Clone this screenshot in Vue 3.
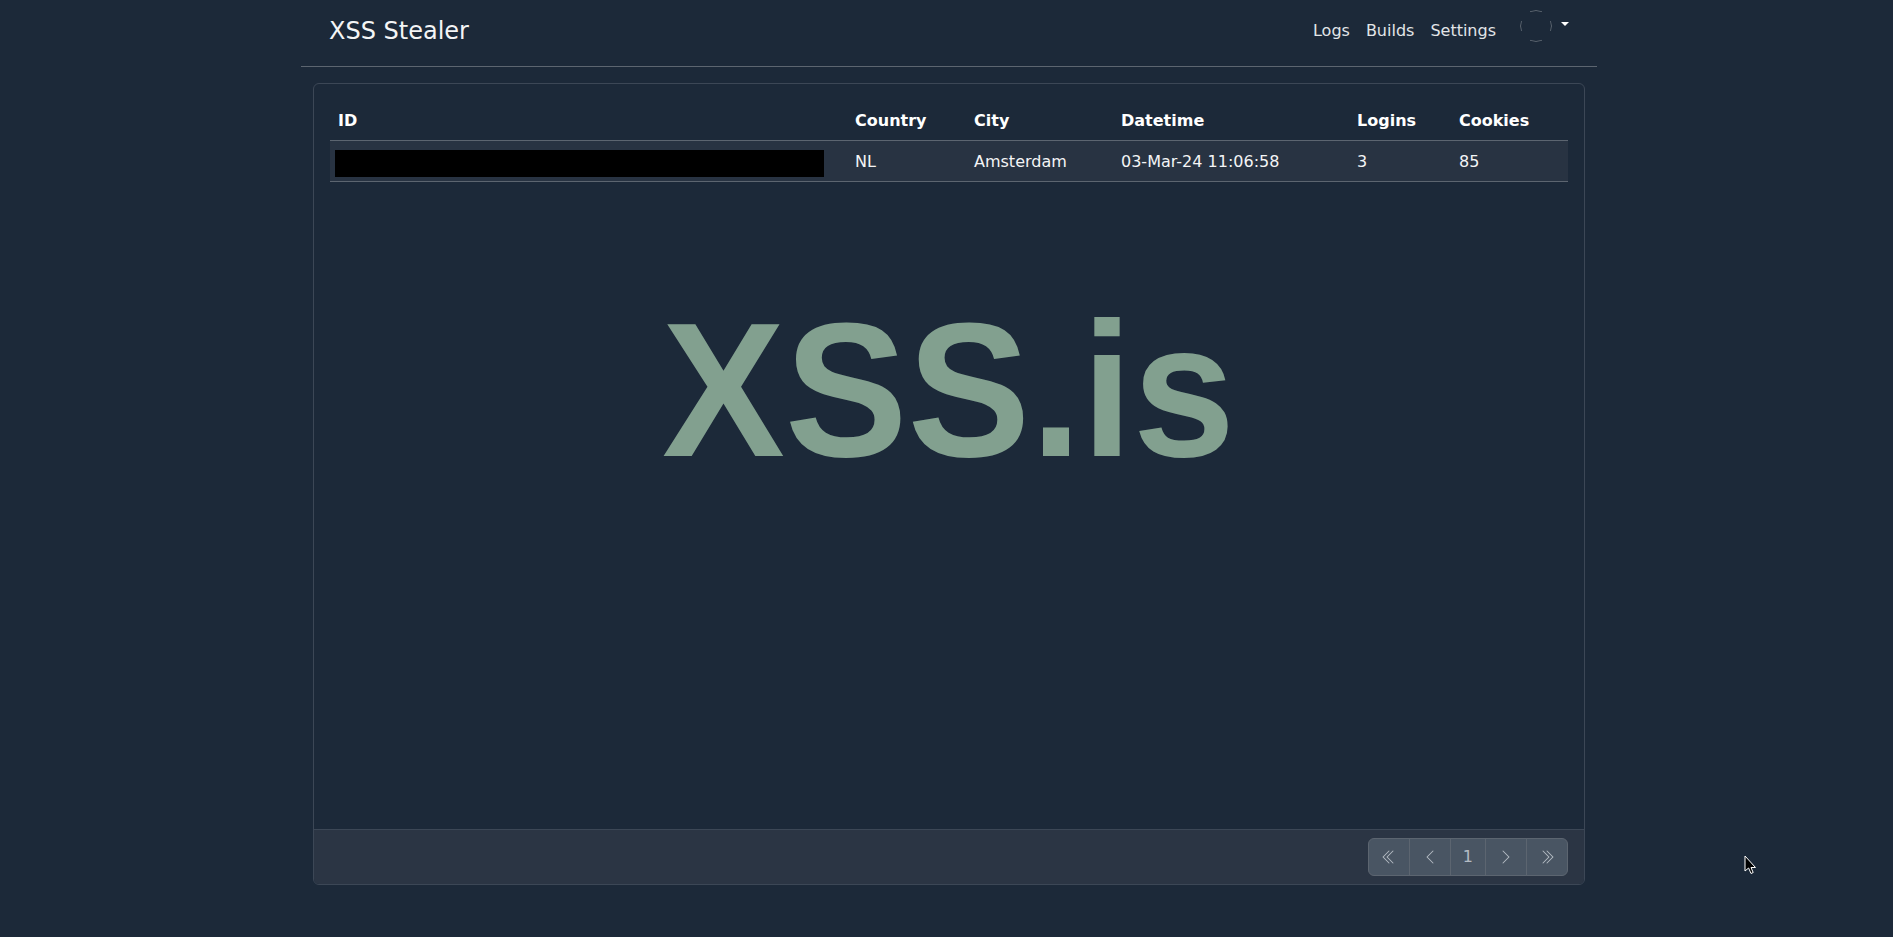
<script setup>
const columns = [
  { key: 'id', label: 'ID', width: '517px' },
  { key: 'country', label: 'Country', width: '119px' },
  { key: 'city', label: 'City', width: '147px' },
  { key: 'datetime', label: 'Datetime', width: '236px' },
  { key: 'logins', label: 'Logins', width: '102px' },
  { key: 'cookies', label: 'Cookies', width: '117px' }
]
const rows = [
  { country: 'NL', city: 'Amsterdam', datetime: '03-Mar-24 11:06:58', logins: '3', cookies: '85' }
]
</script>

<template>
  <div class="page">
    <nav class="navbar">
      <a class="brand">XSS Stealer</a>
      <div class="nav-right">
        <a class="nav-link">Logs</a>
        <a class="nav-link">Builds</a>
        <a class="nav-link">Settings</a>
        <div class="user">
          <span class="avatar"></span>
          <span class="caret"></span>
        </div>
      </div>
    </nav>

    <section class="card">
      <div class="card-body">
        <div class="watermark">XSS.is</div>
        <table class="table">
          <colgroup>
            <col v-for="c in columns" :key="c.key" :style="{ width: c.width }" />
          </colgroup>
          <thead>
            <tr>
              <th v-for="c in columns" :key="c.key">{{ c.label }}</th>
            </tr>
          </thead>
          <tbody>
            <tr v-for="(r, i) in rows" :key="i">
              <td class="id-cell"><span class="redacted"></span></td>
              <td>{{ r.country }}</td>
              <td>{{ r.city }}</td>
              <td>{{ r.datetime }}</td>
              <td>{{ r.logins }}</td>
              <td>{{ r.cookies }}</td>
            </tr>
          </tbody>
        </table>
      </div>
      <footer class="card-footer">
        <ul class="pagination">
          <li class="page-item">
            <svg class="bi" viewBox="0 0 16 16" fill="currentColor"><path d="M8.354 1.646a.5.5 0 0 1 0 .708L2.707 8l5.647 5.646a.5.5 0 0 1-.708.708l-6-6a.5.5 0 0 1 0-.708l6-6a.5.5 0 0 1 .708 0z"/><path d="M12.354 1.646a.5.5 0 0 1 0 .708L6.707 8l5.647 5.646a.5.5 0 0 1-.708.708l-6-6a.5.5 0 0 1 0-.708l6-6a.5.5 0 0 1 .708 0z"/></svg>
          </li>
          <li class="page-item">
            <svg class="bi" viewBox="0 0 16 16" fill="currentColor"><path d="M11.354 1.646a.5.5 0 0 1 0 .708L5.707 8l5.647 5.646a.5.5 0 0 1-.708.708l-6-6a.5.5 0 0 1 0-.708l6-6a.5.5 0 0 1 .708 0z"/></svg>
          </li>
          <li class="page-item">1</li>
          <li class="page-item">
            <svg class="bi" viewBox="0 0 16 16" fill="currentColor"><path d="M4.646 1.646a.5.5 0 0 1 .708 0l6 6a.5.5 0 0 1 0 .708l-6 6a.5.5 0 0 1-.708-.708L10.293 8 4.646 2.354a.5.5 0 0 1 0-.708z"/></svg>
          </li>
          <li class="page-item">
            <svg class="bi" viewBox="0 0 16 16" fill="currentColor"><path d="M3.646 1.646a.5.5 0 0 1 .708 0l6 6a.5.5 0 0 1 0 .708l-6 6a.5.5 0 0 1-.708-.708L9.293 8 3.646 2.354a.5.5 0 0 1 0-.708z"/><path d="M7.646 1.646a.5.5 0 0 1 .708 0l6 6a.5.5 0 0 1 0 .708l-6 6a.5.5 0 0 1-.708-.708L13.293 8 7.646 2.354a.5.5 0 0 1 0-.708z"/></svg>
          </li>
        </ul>
      </footer>
    </section>

    <svg class="cursor" width="13" height="20" viewBox="0 0 13 20">
      <path d="M1 1 L1 16 L4.6 13 L7 18.5 L9.2 17.5 L7 12.5 L11.5 12.5 Z" fill="#000" stroke="#fff" stroke-width="1"/>
    </svg>
  </div>
</template>

<style>
html, body {
  margin: 0;
  background: #1c2939;
}
</style>

<style scoped>
.page {
  box-sizing: border-box;
  width: 1296px;
  min-height: 937px;
  margin-left: 301px;
  color: #fff;
  font-family: "DejaVu Sans", sans-serif;
  font-size: 16px;
  line-height: 24px;
}
.navbar {
  box-sizing: border-box;
  height: 67px;
  display: flex;
  justify-content: space-between;
  align-items: flex-start;
  padding: 0 28px;
  border-bottom: 1px solid #5c6570;
}
.brand {
  font-size: 24px;
  line-height: 36px;
  margin-top: 13px;
  color: #f4f5f6;
}
.nav-right {
  display: flex;
  align-items: flex-start;
  gap: 16px;
}
.nav-link {
  margin-top: 19px;
  color: #e2e5e8;
}
.user {
  display: flex;
  align-items: flex-start;
  margin-left: 8px;
}
.avatar {
  display: block;
  box-sizing: border-box;
  width: 32px;
  height: 32px;
  margin-top: 10px;
  border-radius: 50%;
  border: 1px solid #5c6570;
  -webkit-mask: conic-gradient(#000 0 24deg, transparent 24deg 72deg, #000 72deg 108deg, transparent 108deg 156deg, #000 156deg 204deg, transparent 204deg 252deg, #000 252deg 288deg, transparent 288deg 336deg, #000 336deg);
  mask: conic-gradient(#000 0 24deg, transparent 24deg 72deg, #000 72deg 108deg, transparent 108deg 156deg, #000 156deg 204deg, transparent 204deg 252deg, #000 252deg 288deg, transparent 288deg 336deg, #000 336deg);
}
.caret {
  display: block;
  width: 0;
  height: 0;
  margin: 22px 0 0 9px;
  border-top: 4px solid #fff;
  border-left: 4px solid transparent;
  border-right: 4px solid transparent;
}
.card {
  box-sizing: border-box;
  height: 802px;
  margin: 16px 12px 0;
  display: flex;
  flex-direction: column;
  border: 1px solid #3c4756;
  border-radius: 6px;
  overflow: hidden;
}
.card-body {
  position: relative;
  flex: 1;
  padding: 16px;
}
.watermark {
  position: absolute;
  left: 348px;
  top: 201px;
  font-family: "Liberation Sans", Arial, sans-serif;
  font-weight: 700;
  font-size: 192px;
  line-height: 210px;
  color: #82a08f;
  white-space: nowrap;
  transform: scaleX(0.959);
  transform-origin: left top;
}
.table {
  position: relative;
  box-sizing: border-box;
  width: 1238px;
  table-layout: fixed;
  border-collapse: collapse;
}
th, td {
  padding: 9px 8px 7px;
  text-align: left;
  height: 24px;
}
thead th {
  font-weight: 700;
  border-bottom: 1px solid #5c6570;
}
tbody td {
  background: #283342;
  border-bottom: 1px solid #5c6570;
  color: #f4f5f6;
}
tbody td.id-cell {
  padding: 0 0 0 5px;
  vertical-align: top;
}
.redacted {
  display: block;
  width: 489px;
  height: 27px;
  margin-top: 9px;
  background: #000;
}
.card-footer {
  box-sizing: border-box;
  height: 55px;
  display: flex;
  justify-content: flex-end;
  padding: 8px 16px;
  background: #2b3544;
  border-top: 1px solid #3c4756;
}
.pagination {
  display: flex;
  height: 38px;
  margin: 0;
  padding: 0;
  list-style: none;
}
.page-item {
  box-sizing: border-box;
  height: 38px;
  display: flex;
  align-items: center;
  padding: 0 12px;
  margin-left: -1px;
  background: #495563;
  border: 1px solid #5c6570;
  color: #b4bbc3;
}
.page-item:first-child {
  margin-left: 0;
  border-radius: 6px 0 0 6px;
}
.page-item:last-child {
  border-radius: 0 6px 6px 0;
}
.bi {
  display: block;
  width: 16px;
  height: 16px;
}
.cursor {
  position: absolute;
  left: 1744px;
  top: 855px;
}
</style>
